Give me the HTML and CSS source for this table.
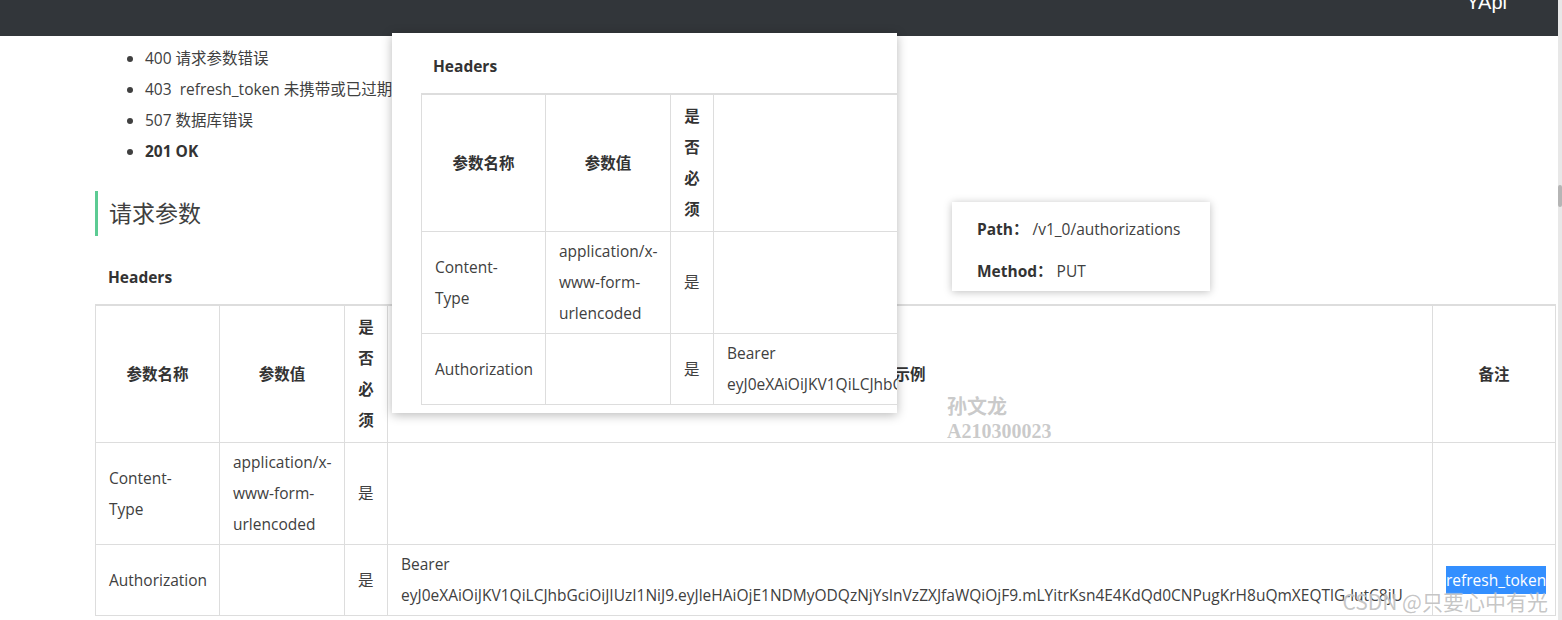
FILE: index.html
```html
<!DOCTYPE html>
<html lang="zh-CN">
<head>
<meta charset="utf-8">
<title>YApi 接口文档</title>
<link rel="stylesheet" href="styles.css">
</head>
<body>
<div class="page">
  <header class="topbar"><span class="brand">YApi</span></header>
  <main class="content">
    <ul class="codes">
      <li>400 请求参数错误</li>
      <li>403 &nbsp;refresh_token 未携带或已过期</li>
      <li>507 数据库错误</li>
      <li><strong>201 OK</strong></li>
    </ul>
    <h2 class="section-title">请求参数</h2>
    <h3 class="sub-title">Headers</h3>
    <table class="params">
      <colgroup><col class="c-name"><col class="c-value"><col class="c-req"><col class="c-example"><col class="c-note"></colgroup>
      <thead>
        <tr><th>参数名称</th><th>参数值</th><th>是否必须</th><th>示例</th><th>备注</th></tr>
      </thead>
      <tbody>
        <tr><td>Content-Type</td><td>application/x-www-form-urlencoded</td><td>是</td><td></td><td></td></tr>
        <tr><td>Authorization</td><td></td><td>是</td><td>Bearer <span class="token">eyJ0eXAiOiJKV1QiLCJhbGciOiJIUzI1NiJ9.eyJleHAiOjE1NDMyODQzNjYsInVzZXJfaWQiOjF9.mLYitrKsn4E4KdQd0CNPugKrH8uQmXEQTlG-lutC8jU</span></td><td><span class="selected">refresh_token</span></td></tr>
      </tbody>
    </table>
  </main>
</div>
<div class="scrollbar"><div class="thumb"></div></div>

<div class="popup">
  <h3 class="sub-title">Headers</h3>
  <table class="params">
    <colgroup><col class="c-name"><col class="c-value"><col class="c-req"><col class="c-example"><col class="c-note"></colgroup>
    <thead>
      <tr><th>参数名称</th><th>参数值</th><th>是否必须</th><th>示例</th><th>备注</th></tr>
    </thead>
    <tbody>
      <tr><td>Content-Type</td><td>application/x-www-form-urlencoded</td><td>是</td><td></td><td></td></tr>
      <tr><td>Authorization</td><td></td><td>是</td><td>Bearer <span class="token">eyJ0eXAiOiJKV1QiLCJhbGciOiJIUzI1NiJ9.eyJleHAiOjE1NDMyODQzNjYsInVzZXJfaWQiOjF9.mLYitrKsn4E4KdQd0CNPugKrH8uQmXEQTlG-lutC8jU</span></td><td>refresh_token</td></tr>
    </tbody>
  </table>
</div>

<div class="path-card">
  <div class="path-row"><b>Path：</b><span class="path-val">/v1_0/authorizations</span></div>
  <div class="path-row"><b>Method：</b><span class="path-val">PUT</span></div>
</div>

<div class="watermark">孙文龙<br>A210300023</div>
<div class="csdn">CSDN @只要心中有光</div>
</body>
</html>
```
FILE: styles.css
```css
* { box-sizing: border-box; }
html, body { margin: 0; height: 100%; }
body {
  font-family: "Open Sans", "Noto Sans CJK SC", sans-serif;
  font-size: 15.5px;
  color: #404040;
  background: #fff;
  display: flex;
  overflow: hidden;
  position: relative;
}
.page { flex: 1; min-width: 0; }

.scrollbar {
  width: 4px;
  background: #e8e8e8;
  padding-top: 185px;
}
.thumb { height: 22px; background: #b5b5b5; border-radius: 2px; }

.topbar {
  height: 36px;
  background: #32363a;
  display: flex;
  justify-content: flex-end;
  align-items: flex-start;
  padding-right: 51px;
}
.brand {
  color: #fff;
  font-family: "Liberation Sans", "Open Sans", sans-serif;
  font-size: 20px;
  line-height: 20px;
  margin-top: -8px;
}

.content { padding: 7px 3px 0 95px; }

.codes {
  margin: 0;
  padding-left: 50px;
  line-height: 31px;
}
.codes strong { color: #333; }

.section-title {
  margin: 24px 0 0;
  border-left: 3px solid #5ccb93;
  padding-left: 11px;
  font-size: 23px;
  font-weight: normal;
  line-height: 45px;
  color: #404040;
}

.sub-title {
  margin: 31px 0 17px;
  padding-left: 13px;
  font-size: 15.5px;
  line-height: 20px;
  font-weight: bold;
  color: #333;
}

.params {
  width: 1460px;
  table-layout: fixed;
  border-collapse: collapse;
  border-top: 2px solid #ddd;
  line-height: 31px;
}
.c-name { width: 124px; }
.c-value { width: 125px; }
.c-req { width: 43px; }
.c-example { width: 1045px; }
.c-note { width: 123px; }
.params th, .params td {
  border: 1px solid #ddd;
  vertical-align: middle;
  text-align: left;
}
.params th {
  padding: 6px 13px;
  text-align: center;
  font-weight: bold;
  color: #333;
}
.params td { padding: 4px 11px 4px 13px; }
.params td:first-child { padding-right: 16px; }
.token { white-space: nowrap; }
.selected {
  display: inline-block;
  line-height: 28px;
  background: #338fff;
  color: #fff;
}

.popup {
  position: absolute;
  left: 392px;
  top: 33px;
  width: 505px;
  height: 380px;
  overflow: hidden;
  background: #fff;
  padding: 23px 0 0 29px;
  box-shadow: 0 2px 10px rgba(0, 0, 0, 0.28);
}
.popup .sub-title { margin: 0 0 17px; padding-left: 12px; }

.path-card {
  position: absolute;
  left: 952px;
  top: 202px;
  width: 258px;
  height: 89px;
  background: #fff;
  padding: 6px 20px 0 25px;
  box-shadow: 0 1px 8px rgba(0, 0, 0, 0.25);
  line-height: 42px;
}
.path-row b { color: #333; }
.path-val { margin-left: 4px; }

.watermark {
  position: absolute;
  left: 947px;
  top: 395px;
  font-family: "Liberation Serif", "Noto Sans CJK SC", serif;
  font-weight: bold;
  font-size: 20px;
  line-height: 24px;
  color: rgba(150, 150, 150, 0.5);
}

.csdn {
  position: absolute;
  right: 14px;
  top: 587px;
  font-family: "Noto Sans CJK SC", sans-serif;
  font-size: 21px;
  line-height: 28px;
  color: rgba(160, 160, 160, 0.6);
  text-shadow: 0 0 1px rgba(255, 255, 255, 0.9);
}
```
